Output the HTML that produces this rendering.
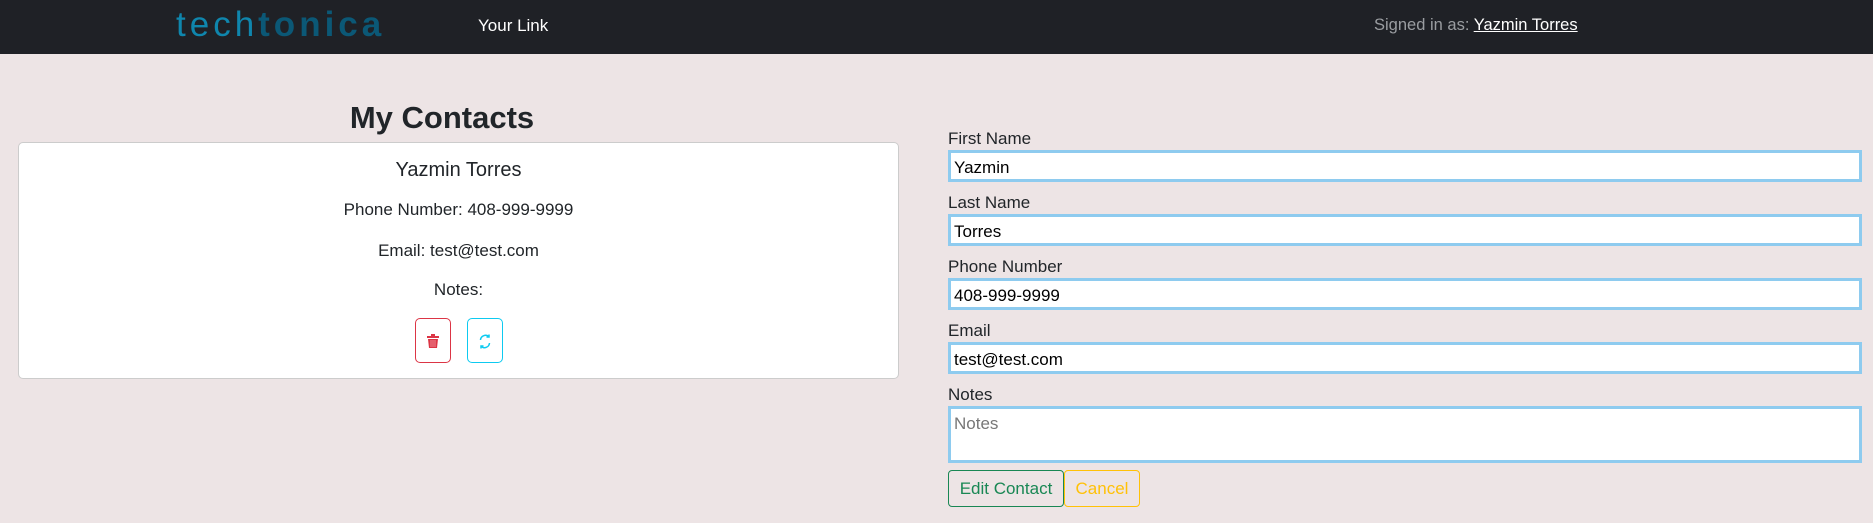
<!DOCTYPE html>
<html><head><meta charset="utf-8"><style>
*{box-sizing:border-box;margin:0;padding:0}
body{width:1873px;height:523px;background:#ede4e5;font-family:"Liberation Sans",sans-serif;color:#212529;position:relative;overflow:hidden}
.nav{position:absolute;left:0;top:0;width:1873px;height:54px;background:#1f2126}
.logo{position:absolute;left:176px;top:5px;font-size:35px;letter-spacing:4px;line-height:40px}
.logo .a{color:#0f86ad}.logo .b{color:#0b5876;font-weight:bold}
.link{position:absolute;left:478px;top:16px;color:#fff;font-size:17px}
.sig{position:absolute;left:1374px;top:16px;color:#9a9da1;font-size:16.5px}
.sig u{color:#fff}
h1{position:absolute;left:0;width:884px;text-align:center;top:98px;font-size:31px;font-weight:bold;line-height:40px}
.card{position:absolute;left:18px;top:142px;width:881px;height:237px;background:#fff;border:1px solid #ccc;border-radius:5px;text-align:center}
.card .t{position:absolute;width:100%;font-size:17px}
.ib{position:absolute;top:175px;width:36px;height:45px;border:1px solid;border-radius:5px;background:#fff}
label{position:absolute;left:948px;font-size:17px}
.in{position:absolute;left:948px;width:914px;height:32px;border:3px solid #8ecbef;background:#fff;font-size:17px;padding:5px 3px;color:#000}
.btn{position:absolute;top:470px;height:37px;border:1px solid;border-radius:4px;font-size:17px;text-align:center;line-height:35px;background:transparent}
</style></head><body>
<div class="nav">
<div class="logo"><span class="a">tech</span><span class="b">tonica</span></div>
<div class="link">Your Link</div>
<div class="sig">Signed in as: <u>Yazmin Torres</u></div>
</div>
<h1>My Contacts</h1>
<div class="card">
<div class="t" style="top:16px;font-size:20px">Yazmin Torres</div>
<div class="t" style="top:57px">Phone Number: 408-999-9999</div>
<div class="t" style="top:98px">Email: test@test.com</div>
<div class="t" style="top:137px">Notes:</div>
<div class="ib" style="left:396px;border-color:#dc3545"><svg width="34" height="43" viewBox="0 0 34 43"><g fill="#dc3545"><rect x="11" y="17" width="12" height="2"/><rect x="15" y="15" width="4" height="2"/><path d="M12 20h10l-1 9h-8z"/></g><g stroke="#f3a1aa" stroke-width="0.8"><path d="M15 21v7M17 21v7M19 21v7"/></g></svg></div>
<div class="ib" style="left:448px;border-color:#0dcaf0"><svg width="34" height="43" viewBox="0 0 34 43" fill="none" stroke="#0dcaf0" stroke-width="1.5"><path d="M12.5 21a5 5 0 0 1 8.5-3.2"/><path d="M21.5 24a5 5 0 0 1-8.5 3.2"/><path d="M21 15.5v2.5h-2.5M13 29.5v-2.5h2.5"/></svg></div>
</div>
<label style="top:129px">First Name</label>
<div class="in" style="top:150px">Yazmin</div>
<label style="top:193px">Last Name</label>
<div class="in" style="top:214px">Torres</div>
<label style="top:257px">Phone Number</label>
<div class="in" style="top:278px">408-999-9999</div>
<label style="top:321px">Email</label>
<div class="in" style="top:342px">test@test.com</div>
<label style="top:385px">Notes</label>
<div class="in" style="top:406px;height:57px;color:#777">Notes</div>
<div class="btn" style="left:948px;width:116px;border-color:#198754;color:#198754">Edit Contact</div>
<div class="btn" style="left:1064px;width:76px;border-color:#ffc107;color:#ffc107">Cancel</div>
</body></html>
